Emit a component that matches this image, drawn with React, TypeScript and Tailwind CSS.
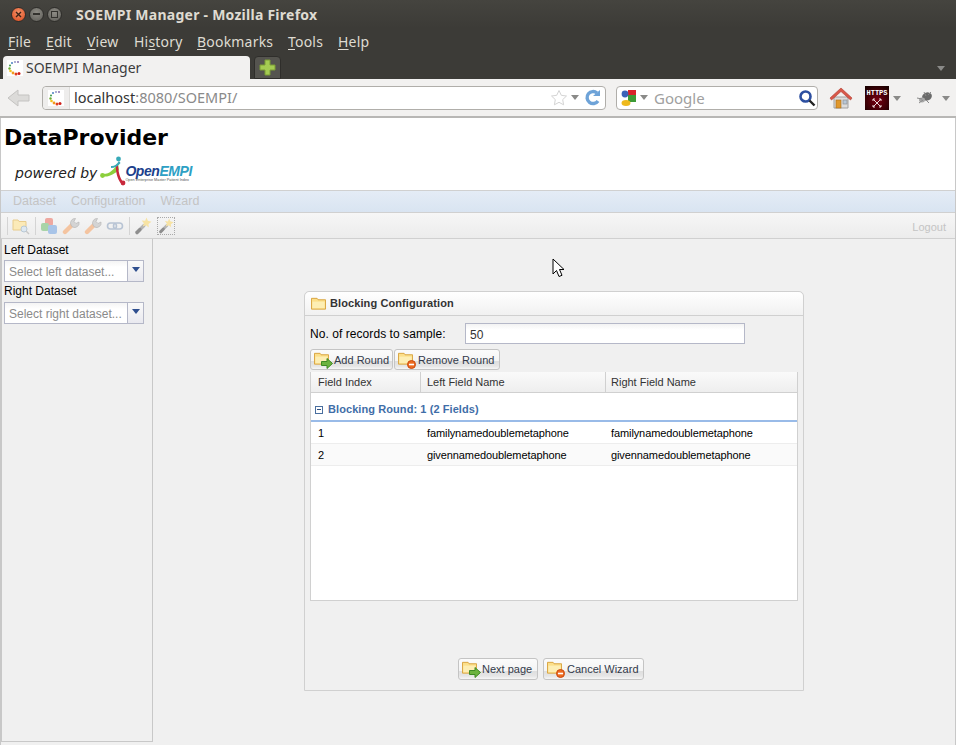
import { ReactNode } from "react";

const UBUNTU = "font-['Noto_Sans',sans-serif]";

function Spinner() {
  return (
    <svg width="16" height="16" viewBox="0 0 16 16" className="bg-white">
      <circle cx="11" cy="2" r="0.9" fill="#7a5fa8" />
      <circle cx="8" cy="2" r="0.9" fill="#8a8ac0" />
      <circle cx="5" cy="3" r="1" fill="#4a7fc0" />
      <circle cx="3" cy="5.5" r="1" fill="#3d9a50" />
      <circle cx="2.5" cy="8.5" r="1.2" fill="#6cab30" />
      <circle cx="3.5" cy="11" r="1.3" fill="#f2c31c" />
      <circle cx="6" cy="13" r="1.4" fill="#f29a1c" />
      <circle cx="9" cy="14" r="1.5" fill="#e0401c" />
      <circle cx="12" cy="13.5" r="1.5" fill="#d0201c" />
    </svg>
  );
}

function Arrow({ className = "" }: { className?: string }) {
  return (
    <svg width="8" height="5" viewBox="0 0 8 5" className={className}>
      <path d="M0 0h8L4 5z" fill="#8a8a88" />
    </svg>
  );
}

function WindowButton({ kind }: { kind: "close" | "min" | "max" }) {
  const bg =
    kind === "close"
      ? "bg-[radial-gradient(circle_at_50%_35%,#f5936a,#d9481c)]"
      : "bg-[radial-gradient(circle_at_50%_35%,#8f8d86,#5c5b56)]";
  return (
    <div className={`w-[15px] h-[15px] rounded-full flex items-center justify-center border border-[#2e2d2a] ${bg}`}>
      {kind === "close" && (
        <svg width="7" height="7" viewBox="0 0 7 7">
          <path d="M1 1l5 5M6 1l-5 5" stroke="#3c2418" strokeWidth="1.4" />
        </svg>
      )}
      {kind === "min" && <div className="w-[7px] h-[2px] bg-[#33322e]" />}
      {kind === "max" && <div className="w-[7px] h-[7px] border border-[#33322e]" />}
    </div>
  );
}

function MenuItem({ first, rest, className }: { first: string; rest: string; className: string }) {
  return (
    <span className={className}>
      <span className="underline underline-offset-2">{first}</span>
      {rest}
    </span>
  );
}

function Folder({ size = 16 }: { size?: number }) {
  return (
    <svg width={size} height={size} viewBox="0 0 16 16" className="shrink-0">
      <path d="M0.5 2.5h6l1 1.500h8V14H0.5z" fill="#fcdf8a" stroke="#d8a23c" />
      <path d="M1.500 6h13V13h-13z" fill="#fdeeb4" />
    </svg>
  );
}

function ButtonIcon({ kind }: { kind: "add" | "remove" }) {
  return (
    <div className="relative w-[20px] h-[18px] shrink-0">
      <Folder size={15} />
      {kind === "add" ? (
        <svg width="12" height="11" viewBox="0 0 12 11" className="absolute right-[1px] bottom-0">
          <path d="M0.5 3.500h5.500V0.500L11.500 5.500 6 10.500V7.500H0.500z" fill="#6cb33f" stroke="#3f8a25" />
        </svg>
      ) : (
        <svg width="9" height="9" viewBox="0 0 9 9" className="absolute right-[2px] bottom-0">
          <circle cx="4.500" cy="4.500" r="4" fill="#ee6a1f" stroke="#c94a10" />
          <rect x="2" y="3.700" width="5" height="1.600" fill="#fff" />
        </svg>
      )}
    </div>
  );
}

function ExtButton({ kind, label, className }: { kind: "add" | "remove"; label: string; className: string }) {
  return (
    <div
      className={`flex items-center pl-[3px] rounded-[3px] border border-[#c4c4c4] bg-[linear-gradient(#fbfbfb_0,#f4f4f4_60%,#dedede_60%,#e6e6e6_85%,#f6f6f6_100%)] ${className}`}
    >
      <ButtonIcon kind={kind} />
      <span className="pt-[1px] text-[11px] text-[#333a4a] whitespace-nowrap">{label}</span>
    </div>
  );
}

function Combo({ placeholder }: { placeholder: string }) {
  return (
    <div className="flex w-[140px] h-[22px] ml-[1px] border border-[#b5b8c8]">
      <div className="w-[122px] bg-[linear-gradient(#f4f4f4,#ffffff_30%)] pl-[4px] pt-[1px] text-[12px] leading-[20px] text-[#8a8a8a] whitespace-nowrap overflow-hidden">
        {placeholder}
      </div>
      <div className="flex-1 border-l border-[#b5b8c8] bg-[linear-gradient(#fafafa,#e9e9ef)] flex justify-center pt-[6px]">
        <svg width="8" height="5" viewBox="0 0 8 5">
          <path d="M0 0h8L4 5z" fill="#2f4f8f" />
        </svg>
      </div>
    </div>
  );
}

function Wrench() {
  return (
    <svg width="18" height="18" viewBox="0 0 18 18">
      <path d="M3 15l7-7" stroke="#f4c4a0" strokeWidth="4.400" strokeLinecap="round" />
      <path d="M9 8a4.500 4.500 0 0 1 4.500-6.500l-1.500 3 2 2 3-1.500A4.500 4.500 0 0 1 10.500 10z" fill="#d4d4d4" stroke="#b8b8b8" strokeWidth="0.700" />
    </svg>
  );
}

function Wand({ size = 18 }: { size?: number }) {
  return (
    <svg width={size} height={size} viewBox="0 0 18 18">
      <path d="M3 15.500l7-7" stroke="#b4b4b4" strokeWidth="3.200" strokeLinecap="round" />
      <path d="M3 15.500l3-3" stroke="#8e8e8e" strokeWidth="3.200" strokeLinecap="round" />
      <path d="M12.500 0.500l1.300 3.200 3.700 1-3 2.200.3 3.600-2.800-2.300-3.300 1.300 1.200-3.300-2.200-2.700 3.500.3z" fill="#f7e3a4" />
    </svg>
  );
}

function ToolSep({ className = "" }: { className?: string }) {
  return <div className={`w-px h-[18px] bg-[#d4d4d4] ${className}`} />;
}

function GridRow({ index, left, right, alt }: { index: string; left: string; right: string; alt?: boolean }) {
  return (
    <div className={`flex h-[22px] items-center pt-[2px] text-[11px] tracking-[-0.1px] text-black border-b border-[#ededed] ${alt ? "bg-[#fafafa]" : "bg-white"}`}>
      <div className="w-[110px] pl-[7px]">{index}</div>
      <div className="w-[184px] pl-[6px]">{left}</div>
      <div className="pl-[6px]">{right}</div>
    </div>
  );
}

function HeaderCell({ className, children }: { className: string; children: ReactNode }) {
  return <div className={`h-full flex items-center border-r border-[#d0d0d0] ${className}`}>{children}</div>;
}

export default function App() {
  return (
    <div className="relative w-[956px] h-[745px] overflow-hidden bg-[#f0f0f0] font-['Liberation_Sans',sans-serif]">
      {/* title bar */}
      <div className={`h-[28px] flex items-center bg-[linear-gradient(#45443f,#3c3b37)] ${UBUNTU}`}>
        <div className="flex gap-[3px] ml-[11px]">
          <WindowButton kind="close" />
          <WindowButton kind="min" />
          <WindowButton kind="max" />
        </div>
        <span className="ml-[14px] text-[14px] tracking-[0.25px] font-bold text-[#dfdbd2] whitespace-nowrap">SOEMPI Manager - Mozilla Firefox</span>
      </div>

      {/* menu bar */}
      <div className={`h-[26px] flex items-center bg-[#3c3b37] pl-[8px] text-[14px] tracking-[0.2px] text-[#dfdbd2] ${UBUNTU}`}>
        <MenuItem first="F" rest="ile" className="w-[38px]" />
        <MenuItem first="E" rest="dit" className="w-[41px]" />
        <MenuItem first="V" rest="iew" className="w-[47px]" />
        <span className="w-[63px]">Hi<span className="underline underline-offset-2">s</span>tory</span>
        <MenuItem first="B" rest="ookmarks" className="w-[91px]" />
        <MenuItem first="T" rest="ools" className="w-[50px]" />
        <MenuItem first="H" rest="elp" className="w-[40px]" />
      </div>

      {/* tab strip */}
      <div className={`h-[25px] flex items-end bg-[#3c3b37] pl-[3px] ${UBUNTU}`}>
        <div className="w-[247px] h-[23px] rounded-t-[4px] bg-[#f2f1f0] flex items-center pl-[4px] text-[14px] text-[#3c3c3c]">
          <Spinner />
          <span className="ml-[3px]">SOEMPI Manager</span>
        </div>
        <div className="ml-[4px] w-[27px] h-[23px] rounded-t-[4px] border border-[#2f2e2b] bg-[#55544f] flex items-center justify-center">
          <svg width="17" height="17" viewBox="0 0 17 17">
            <path d="M6 1h5v5h5v5h-5v5H6v-5H1V6h5z" fill="#a5cc52" stroke="#7a9c34" />
          </svg>
        </div>
        <Arrow className="ml-auto mr-[11px] mb-[8px]" />
      </div>

      {/* navigation bar */}
      <div className={`h-[39px] flex items-center bg-[#f2f1f0] border-b-2 border-[#b8b7b5] ${UBUNTU}`}>
        <svg width="24" height="20" viewBox="0 0 24 20" className="ml-[7px]">
          <path d="M1 10L11 2v5h11v6H11v5z" fill="#dcdbd9" stroke="#c4c3c1" strokeLinejoin="round" />
        </svg>
        <div className="ml-[11px] w-[564px] h-[24px] rounded-[4px] border border-[#b0aeaa] bg-white flex items-center">
          <div className="w-[27px] h-full bg-[#eeedec] rounded-l-[4px] flex items-center justify-center border-r border-[#dddcda]">
            <Spinner />
          </div>
          <span className="ml-[4px] text-[14.5px] text-[#333]">
            localhost<span className="text-[#8a8a8a]">:8080/SOEMPI/</span>
          </span>
          <svg width="18" height="18" viewBox="0 0 18 18" className="ml-auto">
            <path d="M9 1.500l2.300 4.800 5.200.7-3.800 3.600.9 5.200L9 13.300l-4.600 2.500.9-5.200L1.500 7l5.200-.7z" fill="#fff" stroke="#d4d4d4" />
          </svg>
          <Arrow className="ml-[3px]" />
          <svg width="18" height="18" viewBox="0 0 18 18" className="ml-[5px] mr-[3px]">
            <path d="M14 12a6 6 0 1 1-1-8" fill="none" stroke="#6ea3d8" strokeWidth="3.400" />
            <path d="M9 7h7V1z" fill="#6ea3d8" />
          </svg>
        </div>
        <div className="ml-[10px] w-[202px] h-[24px] rounded-[4px] border border-[#b0aeaa] bg-white flex items-center pl-[3px]">
          <svg width="17" height="18" viewBox="0 0 17 18">
            <rect x="8" y="1" width="8" height="6" fill="#d8232a" />
            <rect x="8" y="6" width="8" height="7" fill="#3d9a35" />
            <circle cx="5" cy="5" r="3.400" fill="#3a62b8" />
            <ellipse cx="6" cy="14" rx="4.500" ry="3" fill="#eeb91c" />
          </svg>
          <Arrow className="ml-[3px]" />
          <span className="ml-[6px] pt-[2px] text-[15px] text-[#a0a0a0]">Google</span>
          <svg width="18" height="18" viewBox="0 0 18 18" className="ml-auto mr-[1px]">
            <circle cx="7.500" cy="7.500" r="5" fill="#fff" stroke="#2d4fa0" strokeWidth="2.600" />
            <path d="M11.500 11.500L16.500 16.500" stroke="#222" strokeWidth="2.400" />
          </svg>
        </div>
        <svg width="24" height="24" viewBox="0 0 24 24" className="ml-[11px]">
          <path d="M5 11h14v11H5z" fill="#dcdcdc" stroke="#a0a0a0" />
          <path d="M12 2L1 12l1.500 2L12 5.500 21.500 14l1.500-2z" fill="#d8584a" stroke="#b03c30" strokeWidth="0.600" />
          <rect x="7" y="14" width="5" height="8" fill="#e0982c" stroke="#a86c18" strokeWidth="0.600" />
          <rect x="14" y="14" width="4" height="4" fill="#b8c8d8" stroke="#888" strokeWidth="0.600" />
        </svg>
        <div className="ml-[12px] w-[24px] h-[24px] bg-[radial-gradient(circle_at_50%_60%,#7a0010,#1a0000_90%)] flex flex-col items-center font-['Liberation_Mono',monospace] text-[7px] font-bold text-white leading-[8px] pt-[3px]">
          <span>HTTPS</span>
          <svg width="10" height="10" viewBox="0 0 10 10" className="mt-[1px]">
            <path d="M1 1l8 8M9 1L1 9M1 1h2M1 1v2M9 1H7M9 1v2M1 9h2M1 9V7M9 9H7M9 9V7" stroke="#e8d8d8" strokeWidth="1" />
          </svg>
        </div>
        <Arrow className="ml-[4px] mt-[2px]" />
        <svg width="18" height="14" viewBox="0 0 18 14" className="ml-[15px]">
          <ellipse cx="11" cy="5.500" rx="5" ry="4" fill="#6a6a6a" transform="rotate(-20 11 5.500)" />
          <ellipse cx="6" cy="9" rx="3" ry="2.400" fill="#a8a8a8" />
          <path d="M1 7l5 1M3 12l4-3M8 1l2 4M15 1l-3 3M10 9l3 3" stroke="#8a8a8a" />
        </svg>
        <Arrow className="ml-[8px] mt-[2px]" />
      </div>

      {/* page */}
      <div className="h-[627px] flex flex-col border-x border-[#c8c8c8]">
        <div className="h-[72px] bg-white pl-[3px] pt-[5px]">
          <div className="font-['DejaVu_Sans',sans-serif] font-bold text-[22px] leading-[30px] text-black">DataProvider</div>
          <div className="flex items-center ml-[11px] mt-[3px]">
            <span className="font-['DejaVu_Sans',sans-serif] italic text-[14px] text-[#222] pt-[3px]">powered by</span>
            <svg width="28" height="31" viewBox="0 0 28 31" className="ml-[2px]">
              <path d="M3 18C10 19 15 13 19 8l1 6C15 18 9 22 3 20z" fill="#8ccf3c" />
              <path d="M19 8c0 7 2 14 5 18l-2.500 1C18 22 16.500 15 17 9z" fill="#c8283c" />
              <path d="M12 10c3 .5 6-1.500 8-5l1.500 2c-2 3-6 5-9.500 5z" fill="#38aab8" />
              <circle cx="19.500" cy="3" r="2.400" fill="#38aab8" />
              <circle cx="3.500" cy="19.500" r="2.400" fill="#8ccf3c" />
              <circle cx="24" cy="27" r="2.400" fill="#c8283c" />
            </svg>
            <div className="flex flex-col -ml-[2px] mt-[3px]">
              <span className="text-[14px] leading-[14px] font-bold italic text-[#1c3f8c] tracking-[-0.45px]">
                Open<span className="text-[#2ea0c4]">EMPI</span>
              </span>
              <span className="text-[3.800px] leading-[5px] text-[#555] whitespace-nowrap">Open Enterprise Master Patient Index</span>
            </div>
          </div>
        </div>

        <div className="h-[23px] flex items-center pl-[12px] gap-[15px] text-[12.500px] text-[#c4c4c4] border-y border-[#d0d0d0] bg-[linear-gradient(#e4ecf6,#d9e4f1)]">
          <span>Dataset</span>
          <span>Configuration</span>
          <span>Wizard</span>
        </div>

        <div className="h-[26px] flex items-center pl-[6px] gap-[4px] border-b border-[#d0d0d0] bg-[linear-gradient(#f6f6f6,#ececec)]">
          <ToolSep />
          <svg width="18" height="18" viewBox="0 0 18 18">
            <path d="M1 3h5l1 1.500h7V13H1z" fill="#fbeab8" stroke="#e8cc8c" />
            <circle cx="12" cy="12" r="3" fill="#dde8f2" stroke="#b8c8d4" />
            <path d="M14 14l3 3" stroke="#c8c8c8" strokeWidth="1.400" />
          </svg>
          <ToolSep className="ml-[1px]" />
          <svg width="18" height="18" viewBox="0 0 18 18">
            <rect x="5" y="1" width="8" height="8" rx="2" fill="#eea8a0" />
            <rect x="1" y="6" width="8" height="8" rx="2" fill="#a8d4a8" />
            <rect x="8" y="8" width="9" height="9" rx="2" fill="#a8c4e8" />
          </svg>
          <Wrench />
          <Wrench />
          <svg width="18" height="18" viewBox="0 0 18 18">
            <rect x="1.500" y="6" width="9" height="6" rx="3" fill="none" stroke="#b8c4d4" strokeWidth="1.600" />
            <rect x="7.500" y="6" width="9" height="6" rx="3" fill="none" stroke="#b8c4d4" strokeWidth="1.600" />
          </svg>
          <ToolSep className="ml-[1px]" />
          <Wand />
          <div className="border border-dotted border-[#aaa] ml-[1px]">
            <Wand size={16} />
          </div>
          <span className="ml-auto mr-[9px] pt-[3px] text-[11px] text-[#c4c4c4]">Logout</span>
        </div>

        <div className="flex flex-1 min-h-0">
          {/* left panel */}
          <div className="w-[152px] mb-[3px] border border-[#c8c8c8] border-t-0 pl-[1px]">
            <div className="text-[12px] leading-[13px] text-black mt-[5px] ml-[1px]">Left Dataset</div>
            <div className="mt-[3px]">
              <Combo placeholder="Select left dataset..." />
            </div>
            <div className="text-[12px] leading-[13px] text-black mt-[3px] ml-[1px]">Right Dataset</div>
            <div className="mt-[4px]">
              <Combo placeholder="Select right dataset..." />
            </div>
          </div>

          {/* wizard panel */}
          <div className="ml-[151px] mt-[52px] w-[500px] h-[400px] rounded-t-[5px] border border-[#d0d0d0] flex flex-col">
            <div className="h-[24px] flex items-center pl-[6px] rounded-t-[5px] border-b border-[#d0d0d0] bg-[linear-gradient(#ffffff,#f1f1f1)]">
              <Folder size={15} />
              <span className="ml-[4px] text-[11px] tracking-[0.1px] font-bold text-[#333]">Blocking Configuration</span>
            </div>
            <div className="flex items-center h-[21px] mt-[7px] pl-[5px]">
              <span className="w-[155px] text-[12px] tracking-[0.06px] text-black">No. of records to sample:</span>
              <div className="w-[280px] h-[21px] border border-[#b5b8c8] bg-[linear-gradient(#f3f3f3,#ffffff_30%)] pl-[4px] pt-[1px] text-[12px] leading-[20px] text-[#333]">
                50
              </div>
            </div>
            <div className="flex gap-[1px] mt-[5px] ml-[5px]">
              <ExtButton kind="add" label="Add Round" className="w-[83px] h-[21px]" />
              <ExtButton kind="remove" label="Remove Round" className="w-[106px] h-[21px]" />
            </div>
            <div className="w-[488px] h-[229px] ml-[5px] mt-[2px] border border-t-0 border-[#d0d0d0] bg-white flex flex-col">
              <div className="h-[21px] flex text-[11px] text-[#333] border-b border-[#d0d0d0] bg-[linear-gradient(#fafafa,#eeeeee)]">
                <HeaderCell className="w-[110px] pl-[7px]">Field Index</HeaderCell>
                <HeaderCell className="w-[185px] pl-[6px]">Left Field Name</HeaderCell>
                <div className="h-full flex items-center pl-[5px]">Right Field Name</div>
              </div>
              <div className="h-[29px] flex items-center pl-[4px] pt-[6px] border-b-2 border-[#99bbe8]">
                <div className="w-[8px] h-[8px] border border-[#4a6f9f] flex items-center justify-center">
                  <div className="w-[4px] h-px bg-[#2f4f7f]" />
                </div>
                <span className="ml-[5px] text-[11px] tracking-[0.08px] font-bold text-[#3f6ea8]">Blocking Round: 1 (2 Fields)</span>
              </div>
              <GridRow index="1" left="familynamedoublemetaphone" right="familynamedoublemetaphone" />
              <GridRow index="2" left="givennamedoublemetaphone" right="givennamedoublemetaphone" alt />
            </div>
            <div className="flex gap-[5px] mt-[57px] ml-[153px]">
              <ExtButton kind="add" label="Next page" className="w-[80px] h-[22px]" />
              <ExtButton kind="remove" label="Cancel Wizard" className="w-[101px] h-[22px]" />
            </div>
          </div>
        </div>
      </div>

      {/* mouse pointer */}
      <svg width="14" height="21" viewBox="0 0 14 21" className="absolute left-[552px] top-[258px]">
        <path d="M1 1v15l3.500-3.500 2.500 6 3-1.200-2.500-5.800H12z" fill="#fff" stroke="#000" strokeWidth="1" />
      </svg>
    </div>
  );
}
